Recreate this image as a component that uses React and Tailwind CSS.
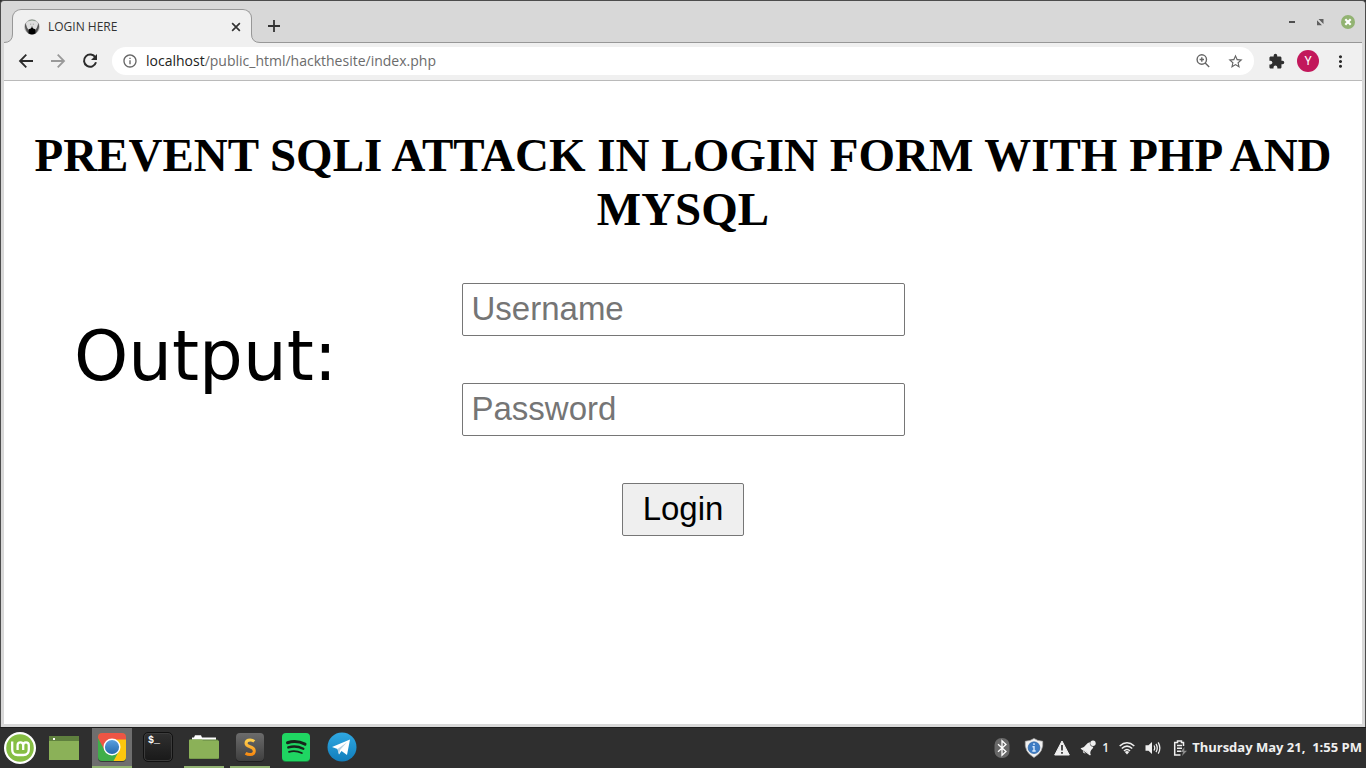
import React from "react";
import {
  MdExtension,
  MdMoreVert,
  MdOutlineInfo,
  MdStarOutline,
} from "react-icons/md";

function LineIcon({ d, fill, strokeWidth = 1.8, className }) {
  return (
    <svg viewBox="0 0 20 20" className={className} fill="none" stroke="currentColor" strokeWidth={strokeWidth} aria-hidden="true">
      <path d={d} />
      {fill && <path d={fill} fill="currentColor" stroke="none" />}
    </svg>
  );
}

function Favicon() {
  return (
    <svg viewBox="0 0 16 16" className="size-4 shrink-0" aria-hidden="true">
      <circle cx="8" cy="8" r="7.3" fill="#dedede" stroke="#a5a5a5" strokeWidth=".7" />
      <path d="M1.6 4Q-.2 9 3 13L5 14.8 5 11.5 3 8.5Z" fill="#555" />
      <path d="M14.4 4Q16.2 9 13 13L11 14.8 11 11.5 13 8.5Z" fill="#555" />
      <path d="M4.5 1.8Q8 .2 11.5 1.8" fill="none" stroke="#8d9c8d" />
      <path d="M6 5.2h1.2M8.8 5.2H10M7.2 7.4h1.6" stroke="#8a8a8a" strokeWidth=".7" />
      <path d="M4.6 10.2L6.8 9.6 8 7.8 9.2 9.6 11.4 10.2V14.6Q8 16.6 4.6 14.6Z" fill="#000" />
    </svg>
  );
}

function TabStrip() {
  return (
    <div className="flex h-[42px] items-end border-b border-[#979797] bg-[#d8d8d8] pl-2">
      <div className="relative -mb-px flex h-[34px] w-60 items-center rounded-t-[9px] border border-b-0 border-[#979797] bg-[#f0f0f0] pr-2 pl-[11px]">
        <svg viewBox="0 0 9 9" className="absolute bottom-0 -left-[9px] size-[9px]" aria-hidden="true">
          <path d="M0 8.5Q8.5 8.5 8.5 0H9V9H0Z" fill="#f0f0f0" />
          <path d="M0 8.5Q8.5 8.5 8.5 0" fill="none" stroke="#979797" />
        </svg>
        <svg viewBox="0 0 9 9" className="absolute -right-[9px] bottom-0 size-[9px]" aria-hidden="true">
          <path d="M9 8.5Q.5 8.5 .5 0H0V9H9Z" fill="#f0f0f0" />
          <path d="M9 8.5Q.5 8.5 .5 0" fill="none" stroke="#979797" />
        </svg>
        <Favicon />
        <span className="ml-2 flex-1 text-xs text-[#333]">LOGIN HERE</span>
        <button type="button" aria-label="Close tab" className="text-[#333]">
          <LineIcon d="M4.5 4.5l11 11M15.5 4.5l-11 11" strokeWidth={2.4} className="size-3.5" />
        </button>
      </div>
      <button type="button" aria-label="New tab" className="mb-1.5 ml-3 text-[#333]">
        <LineIcon d="M10 4v12M4 10h12" className="size-5" />
      </button>
      <div className="ml-auto flex items-center gap-3 self-start pt-[13px] pr-[7px]">
        <button type="button" aria-label="Minimize" className="grid size-4 place-items-center">
          <svg viewBox="0 0 16 16" className="size-4">
            <path d="M4 8h6" stroke="#4f4f4f" strokeWidth="1.8" />
          </svg>
        </button>
        <button type="button" aria-label="Restore" className="grid size-4 place-items-center">
          <svg viewBox="0 0 16 16" className="size-4">
            <path d="M5.5 5H10.5V10Z M4 6.3V11.3H9Z" fill="#606060" />
          </svg>
        </button>
        <button type="button" aria-label="Close window" className="grid size-3.5 place-items-center rounded-full bg-[#92b372]">
          <svg viewBox="0 0 14 14" className="size-3.5">
            <path d="M4.3 4.3l5.4 5.4M9.7 4.3l-5.4 5.4" stroke="#fff" strokeWidth="2.2" />
          </svg>
        </button>
      </div>
    </div>
  );
}

function Toolbar() {
  return (
    <div className="flex h-[38px] items-center border-b border-[#bababa] bg-[#f0f0f0] pr-3 pb-px pl-3">
      <div className="flex items-center gap-3 text-[#2b2b2b]">
        <button type="button" aria-label="Back">
          <LineIcon d="M17 10H4.2M10.3 3.7L4 10l6.3 6.3" className="size-5" />
        </button>
        <button type="button" aria-label="Forward" className="text-[#999]">
          <LineIcon d="M3 10h12.8M9.7 3.7L16 10l-6.3 6.3" className="size-5" />
        </button>
        <button type="button" aria-label="Reload">
          <LineIcon d="M15.4 6.6A6.1 6.1 0 1 0 16 11.3" fill="M17 3V9H11Z" strokeWidth={2} className="size-5" />
        </button>
      </div>
      <div className="ml-3 flex h-7 flex-1 items-center rounded-full bg-white pr-2.5 pl-2.5 text-[#666]">
        <MdOutlineInfo size={16} />
        <a href="#address" className="ml-2 flex-1 text-sm text-[#6b6b6b]">
          <span className="text-[#222]">localhost</span>/public_html/hackthesite/index.php
        </a>
        <button type="button" aria-label="Zoom" className="mr-4">
          <svg viewBox="0 0 16 16" className="size-4" fill="none" stroke="currentColor" strokeWidth="1.4">
            <circle cx="6.8" cy="6.5" r="4.7" />
            <path d="M10.2 10L14.2 14M6.8 4.3v4.4M4.6 6.5H9" />
          </svg>
        </button>
        <button type="button" aria-label="Bookmark"><MdStarOutline size={17} /></button>
      </div>
      <button type="button" aria-label="Extensions" className="ml-3.5 text-[#2f2f2f]"><MdExtension size={17} /></button>
      <button type="button" aria-label="Profile" className="ml-3 size-[22px] rounded-full bg-[#c2185b] font-[Roboto] text-xs text-white">Y</button>
      <button type="button" aria-label="Menu" className="ml-3 text-[#2b2b2b]"><MdMoreVert size={19} /></button>
    </div>
  );
}

function LoginPage() {
  const field =
    "h-[53px] w-[443px] rounded-[2px] border border-[#767676] bg-white px-[9px] pb-0.5 text-[33px] text-black placeholder:text-[#757575] placeholder:opacity-100 focus:outline-none";
  return (
    <main className="relative flex-1 bg-white px-5 pt-[47px]">
      <h1 className="text-center font-['Liberation_Serif',serif] text-[47px] leading-[54px] font-bold text-black">
        PREVENT SQLI ATTACK IN LOGIN FORM WITH PHP AND MYSQL
      </h1>
      <form
        onSubmit={(e) => e.preventDefault()}
        className="mt-[47px] flex flex-col items-center gap-[47px] font-['Liberation_Sans',sans-serif]"
      >
        <input type="text" aria-label="Username" placeholder="Username" className={field} />
        <input type="password" aria-label="Password" placeholder="Password" className={field} />
        <button type="submit" className="h-[53px] rounded-[2px] border border-[#767676] bg-[#efefef] px-5 pb-0.5 text-[33px] text-black">
          Login
        </button>
      </form>
      <output className="absolute top-[233px] left-[70px] font-['DejaVu_Sans',sans-serif] text-[69px] leading-[84px] text-black">
        Output:
      </output>
    </main>
  );
}

function MintIcon() {
  return (
    <svg viewBox="0 0 32 32" className="size-8">
      <circle cx="16" cy="16" r="16" fill="#fff" />
      <circle cx="16" cy="16" r="13.8" fill="#86be43" />
      <path
        d="M8.2 9.5V17.5Q8.2 23 13.5 23H19.5Q24.8 23 24.8 17.5V13.2Q24.8 10.4 22 10.4T19.2 13.2V18M19.2 13.2Q19.2 10.4 16.4 10.4T13.6 13.2V18"
        fill="none"
        stroke="#fff"
        strokeWidth="2.3"
      />
    </svg>
  );
}

function DesktopIcon() {
  return (
    <svg viewBox="0 0 30 24" className="h-6 w-[30px]">
      <path d="M0 0h30v24H0z" fill="#8bb158" />
      <path d="M0 0h30v5H0z" fill="#5f803e" />
      <path d="M4 2h2v2H4z" fill="#fff" />
    </svg>
  );
}

function ChromeIcon() {
  return (
    <svg viewBox="0 0 30 30" className="size-[30px]">
      <defs>
        <clipPath id="chrome-tile"><rect x="1" y="1" width="28" height="28" rx="4" /></clipPath>
        <linearGradient id="chrome-blue" x2="0" y2="1"><stop stopColor="#5ba0df" /><stop offset="1" stopColor="#2569ad" /></linearGradient>
      </defs>
      <rect x="1" y="2" width="28" height="28" rx="4" fill="#3b3b3b" />
      <g clipPath="url(#chrome-tile)">
        <path d="M0 0h30v30H0z" fill="#3fae49" />
        <path d="M15 7H30V30H16L22 19Z" fill="#fdc70e" />
        <path d="M1 0H30V7.5H15L8 19 1 6Z" fill="#ee5545" />
      </g>
      <circle cx="15" cy="15" r="8.5" fill="#fff" />
      <circle cx="15" cy="15" r="7.1" fill="url(#chrome-blue)" />
    </svg>
  );
}

function TerminalIcon() {
  return (
    <span className="flex size-[30px] items-start rounded-[5px] border border-[#111] bg-linear-to-b from-[#303030] to-[#191919] px-1 pt-[3px] font-['Liberation_Mono',monospace] text-[10px] leading-[10px] font-bold text-white shadow-[inset_0_0_0_1px_#3c3c3c]">
      $_
    </span>
  );
}

function FilesIcon() {
  return (
    <svg viewBox="0 0 30 26" className="h-[26px] w-[30px]">
      <path d="M3 7V3.5H5L6 1.3H12L13 3.5H27V8H3Z" fill="#fff" />
      <path d="M1 5.5H12L14 5.5H28.5L30 8V24Q30 25 29 25H1Q0 25 0 24V6.5Z" fill="#618341" />
      <path d="M0 6.5Q0 5.5 1 5.5H12.5L14 6.5H29Q30 6.5 30 7.5V23.5Q30 24.5 29 24.5H1Q0 24.5 0 23.5Z" fill="#8bb158" />
    </svg>
  );
}

function SublimeIcon() {
  return (
    <svg viewBox="0 0 30 30" className="size-[30px]">
      <defs>
        <linearGradient id="sublime-tile" x2="0" y2="1"><stop stopColor="#6c6c6c" /><stop offset="1" stopColor="#3f3f3f" /></linearGradient>
        <linearGradient id="sublime-mark" x2="0" y2="1"><stop stopColor="#ffd04f" /><stop offset="1" stopColor="#f88b11" /></linearGradient>
      </defs>
      <rect x="1" y="2" width="28" height="28" rx="4" fill="#1e1e1e" />
      <rect x="1" y="1" width="28" height="28" rx="4" fill="url(#sublime-tile)" />
      <path
        d="M19.3 9.4Q17.5 8 15.3 8 11 8 11 11.3 11 13.6 15 14.8 19.3 16 19.3 19 19.3 22.6 15 22.6 12.6 22.6 10.6 21.2"
        fill="none"
        stroke="url(#sublime-mark)"
        strokeWidth="3"
      />
    </svg>
  );
}

function SpotifyIcon() {
  return (
    <svg viewBox="0 0 30 30" className="size-[30px]">
      <rect x="1" y="2" width="28" height="28" rx="4" fill="#1c7e3e" />
      <rect x="1" y="1" width="28" height="28" rx="4" fill="#1fd662" />
      <g fill="none" stroke="#17251b" strokeLinecap="round">
        <path d="M6.5 10.7Q15.5 7.8 24 12.2" strokeWidth="3" />
        <path d="M7.3 15.4Q15 13 22.3 16.8" strokeWidth="2.4" />
        <path d="M8 19.8Q14.5 17.9 20.8 21" strokeWidth="1.9" />
      </g>
    </svg>
  );
}

function TelegramIcon() {
  return (
    <svg viewBox="0 0 30 30" className="size-[30px]">
      <defs>
        <linearGradient id="telegram-disc" x2="0" y2="1"><stop stopColor="#2fa8e2" /><stop offset="1" stopColor="#117dbb" /></linearGradient>
      </defs>
      <circle cx="15" cy="15" r="14.5" fill="url(#telegram-disc)" />
      <path d="M5 15L23 7.5 20 23 14.5 19 12 22.5 10.5 17Z" fill="#fff" />
      <path d="M10.5 17L20 10.3 13 18 12 22.5Z" fill="#b5cfe0" />
    </svg>
  );
}

const apps = [
  { name: "Google Chrome", Icon: ChromeIcon, cell: "bg-[#6e6e6e] border-[#92b372]" },
  { name: "Terminal", Icon: TerminalIcon, cell: "border-transparent" },
  { name: "Files", Icon: FilesIcon, cell: "border-[#92b372]" },
  { name: "Sublime Text", Icon: SublimeIcon, cell: "border-[#92b372]" },
  { name: "Spotify", Icon: SpotifyIcon, cell: "border-transparent" },
  { name: "Telegram", Icon: TelegramIcon, cell: "border-transparent" },
];

function Tray() {
  return (
    <div className="ml-auto flex items-center pr-1 text-[#efefef]">
      <svg viewBox="0 0 16 20" className="mr-3.5 h-5 w-4" aria-hidden="true">
        <rect x=".5" width="15" height="20" rx="7" fill="#686868" />
        <path d="M4 6.2l8 7.3-4 3.7V2.8l4 3.7-8 7.3" fill="none" stroke="#fff" strokeWidth="1.3" />
      </svg>
      <svg viewBox="0 0 20 20" className="mr-2.5 size-5" aria-hidden="true">
        <path d="M10 .5Q13.5 3 18.7 3.3 20 14 10 19.5 0 14 1.3 3.3 6.5 3 10 .5Z" fill="#f1f1f1" stroke="#aaa" strokeWidth=".7" />
        <circle cx="10" cy="9.7" r="5.9" fill="#3d7cc4" stroke="#245d9e" strokeWidth=".6" />
        <path d="M10 5.3v1.8M8.5 8.7H10V13M8.3 13h3.4" fill="none" stroke="#d8ebff" strokeWidth="1.4" />
      </svg>
      <svg viewBox="0 0 16 16" className="mr-2.5 size-4" aria-hidden="true">
        <path d="M8 1L15.3 15H.7Z" fill="currentColor" stroke="currentColor" strokeLinejoin="round" />
        <path d="M8 5v5.5M8 12v1.8" stroke="#2f2f2f" strokeWidth="1.7" />
      </svg>
      <svg viewBox="0 0 16 16" className="mr-1.5 size-4" aria-hidden="true">
        <path d="M1 8.2Q4.5 7.5 6.3 4.6 7.6 2.4 10 2.2A3.5 3.5 0 0 0 13.4 6.8Q13 8.6 11.2 10 9.8 11.6 10.4 15L6.9 11.9Z" fill="currentColor" />
        <path d="M1 8.2L10.4 15" stroke="currentColor" strokeWidth="1.2" />
        <path d="M2.9 10.8Q2.6 13.4 5.8 13.4Z" fill="currentColor" />
        <circle cx="13" cy="3.3" r="2.7" fill="currentColor" />
      </svg>
      <span className="mr-2.5 text-xs font-semibold">1</span>
      <svg viewBox="0 0 16 14" className="mr-2.5 h-3.5 w-4" aria-hidden="true">
        <g fill="none" stroke="currentColor" strokeWidth="1.6">
          <path d="M.7 5Q8-1.5 15.3 5" />
          <path d="M2.8 7.5Q8 2.7 13.2 7.5" />
          <path d="M5 10Q8 7 11 10" />
        </g>
        <path d="M5.8 11Q8 9.2 10.2 11L8 13.5Z" fill="currentColor" />
      </svg>
      <svg viewBox="0 0 16 16" className="mr-3 size-4" aria-hidden="true">
        <path d="M.5 5.3H3.5L7 2V14L3.5 10.7H.5Z" fill="currentColor" />
        <path d="M9 5.5Q10.5 8 9 10.5M11 3.8Q13.5 8 11 12.2M13.2 2.3Q16.5 8 13.2 13.7" fill="none" stroke="currentColor" strokeWidth="1.3" />
      </svg>
      <svg viewBox="0 0 14 16" className="mr-[5px] h-4 w-3.5" aria-hidden="true">
        <path d="M10.5 6V2.5H8.5V1H4.5V2.5H1.7V15H7.5M4 5.5h5M4 8.3h5M4 11.2h4" fill="none" stroke="currentColor" strokeWidth="1.5" />
        <path d="M11.5 7L7.5 12H10L9 16 14 10.8H11.2Z" fill="#8b8b8b" />
      </svg>
      <time className="text-[13px] font-bold whitespace-pre">Thursday May 21,  1:55 PM</time>
    </div>
  );
}

function Taskbar() {
  return (
    <nav aria-label="Taskbar" className="flex h-[41px] items-stretch border-t border-[#1c1c1c] bg-[#2f2f2f]">
      <button type="button" aria-label="Menu" className="grid w-10 place-items-center"><MintIcon /></button>
      <button type="button" aria-label="Show desktop" className="mr-2 ml-1 grid w-10 place-items-center"><DesktopIcon /></button>
      <div className="flex gap-1.5">
        {apps.map(({ name, Icon, cell }) => (
          <button key={name} type="button" aria-label={name} className={`grid w-10 place-items-center border-b-2 ${cell}`}>
            <Icon />
          </button>
        ))}
      </div>
      <Tray />
    </nav>
  );
}

export default function App() {
  return (
    <div className="flex min-h-screen flex-col bg-[#2f2f2f] font-['Open_Sans','Noto_Sans',sans-serif]">
      <div className="flex flex-1 flex-col overflow-hidden rounded-t-[4px] border border-b-0 border-[#4c4c4c] bg-[#d8d8d8] px-[3px] pb-[3px]">
        <TabStrip />
        <Toolbar />
        <LoginPage />
      </div>
      <Taskbar />
    </div>
  );
}
